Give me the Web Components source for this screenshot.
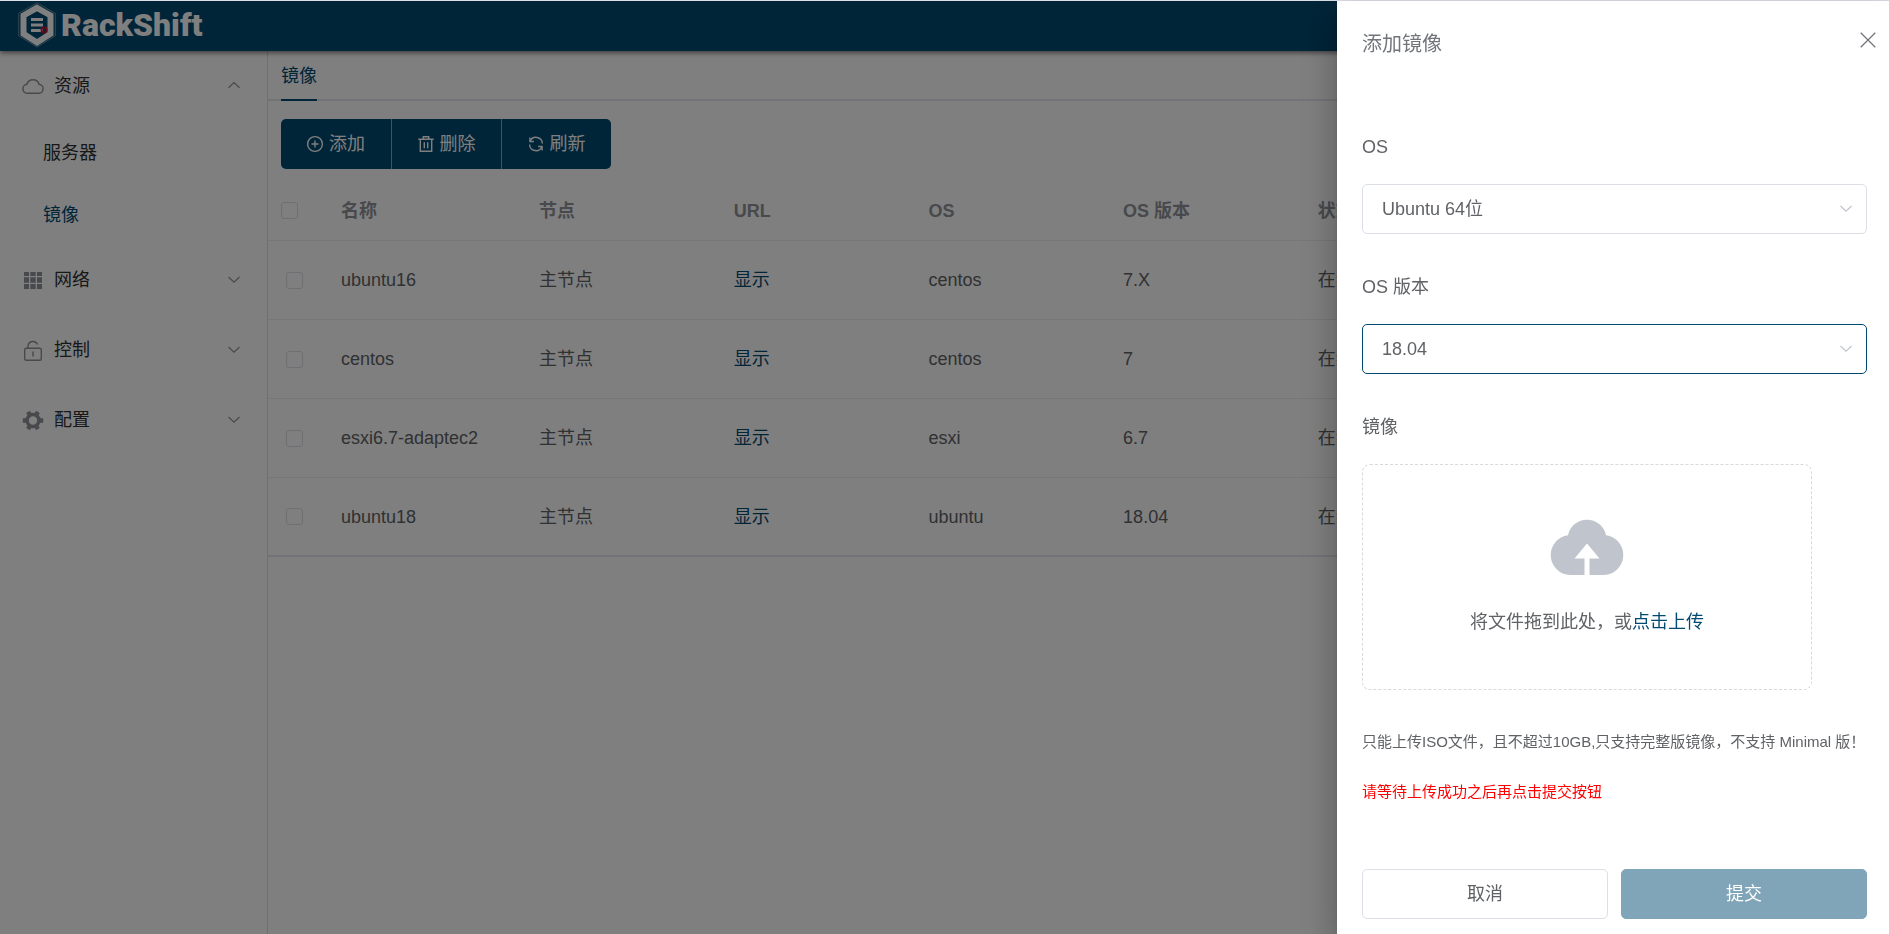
<!DOCTYPE html>
<html lang="zh-CN">
<head>
<meta charset="utf-8">
<title>RackShift</title>
<style>
  :root {
    --primary: #004971;
    --text: #606266;
    --title: #303133;
    --muted: #909399;
    --border: #dcdfe6;
    --line: #ebeef5;
  }
  html, body { height: 100%; }
  body {
    margin: 0;
    box-sizing: border-box;
    border-top: 1px solid var(--border);
    overflow: hidden;
    background: #fff;
    color: var(--text);
    font: 18px/24px "Liberation Sans", "Noto Sans CJK SC", sans-serif;
  }
</style>
</head>
<body>
<rack-app>
  <rack-header slot="header"></rack-header>
  <rack-sidebar slot="aside">
    <rack-menu-group icon="cloud" label="资源" open>
      <rack-menu-item>服务器</rack-menu-item>
      <rack-menu-item active>镜像</rack-menu-item>
    </rack-menu-group>
    <rack-menu-group icon="grid" label="网络"></rack-menu-group>
    <rack-menu-group icon="lock" label="控制"></rack-menu-group>
    <rack-menu-group icon="gear" label="配置"></rack-menu-group>
  </rack-sidebar>
  <rack-tabs>镜像</rack-tabs>
  <rack-toolbar></rack-toolbar>
  <image-table></image-table>
</rack-app>
<rack-drawer heading="添加镜像">
  <rack-select label="OS" value="Ubuntu 64位"></rack-select>
  <rack-select label="OS 版本" value="18.04" active></rack-select>
  <rack-upload label="镜像"></rack-upload>
</rack-drawer>

<script>
const ICONS = {
  cloud: '<svg viewBox="0 0 20 20" fill="none" stroke="currentColor" stroke-width="1.5"><path d="M5 17.300A4.500 4.500 0 0 1 3.900 8.300A6.400 6.400 0 0 1 16.100 8.300A4.500 4.500 0 0 1 15 17.300Z"/></svg>',
  grid: '<svg viewBox="0 0 20 20" fill="currentColor"><path d="M1 2h5v4H1zM7.300 2h5.400v4H7.300zM14 2h5v4h-5zM1 7.300h5v5.400H1zM7.300 7.300h5.400v5.400H7.300zM14 7.300h5v5.400h-5zM1 14h5v5H1zM7.300 14h5.400v5H7.300zM14 14h5v5h-5z"/></svg>',
  lock: '<svg viewBox="0 0 20 20" fill="none" stroke="currentColor" stroke-width="1.400"><rect x="1.700" y="8.200" width="16.600" height="12" rx="1.500"/><path d="M5 8V6A5 5 0 0 1 14.600 4.600M10 11.500v5"/></svg>',
  gear: '<svg viewBox="0 0 20 20" fill="none" stroke="currentColor"><circle cx="10" cy="10.500" r="6" stroke-width="3.600"/><path stroke-width="4.400" d="M17 10.500h3.200M-.2 10.500H3M13.500 16.600l1.400 2.500M5.100 1.900l1.400 2.500M6.500 16.600l-1.400 2.500M14.900 1.900l-1.400 2.500"/></svg>',
  plus: '<svg viewBox="0 0 16 16" fill="none" stroke="currentColor" stroke-width="1.400"><circle cx="8" cy="8" r="7.400"/><path d="M8 4.500v7M4.500 8h7"/></svg>',
  trash: '<svg viewBox="0 0 16 16" fill="none" stroke="currentColor" stroke-width="1.400"><path d="M.3 3.200h15.400M5.300 3V.8h5.400V3M2.300 3.400v11.800h11.400V3.400M6.300 6.200v6M9.700 6.200v6"/></svg>',
  refresh: '<svg viewBox="0 0 16 16" fill="none" stroke="currentColor" stroke-width="1.400"><path d="M1.900 1.500v4h4M2.100 5.300A6.400 6.400 0 0 1 14.400 7.500M14.100 14.500v-4h-4M13.900 10.700A6.400 6.400 0 0 1 1.600 8.500"/></svg>',
  down: '<svg viewBox="0 0 14 14" fill="none" stroke="currentColor" stroke-width="1.200"><path d="M1.500 4L7 9.200L12.500 4"/></svg>',
  up: '<svg viewBox="0 0 14 14" fill="none" stroke="currentColor" stroke-width="1.200"><path d="M1.500 8.700L7 3.500L12.500 8.700"/></svg>',
  close: '<svg viewBox="0 0 16 16" fill="none" stroke="currentColor" stroke-width="1.300"><path d="M.7.7L15.300 15.300M15.300.7L.7 15.300"/></svg>',
  upload: '<svg viewBox="0 0 74 56"><path fill="#c0c4cc" d="M20 56A20 20 0 0 1 18 16.200A19.400 19.400 0 0 1 56 16.200A20 20 0 0 1 54 56Z"/><path fill="#fff" d="M37 24.500L49.500 39.500H39.500V56H34.500V39.500H24.500Z"/></svg>'
};

const BASE = '*{box-sizing:border-box}button,select,input{font:inherit;color:inherit;margin:0}svg{display:block;overflow:visible}';

class Base extends HTMLElement {
  connectedCallback() {
    if (this.shadowRoot) return;
    const t = document.createElement('template');
    t.innerHTML = `<style>${BASE}${this.css()}</style>${this.html()}`;
    this.attachShadow({ mode: 'open' }).append(t.content.cloneNode(true));
  }
  attr(n) { return this.getAttribute(n) || ''; }
}

customElements.define('rack-app', class extends Base {
  css() { return `
    :host{display:grid;grid-template:50px 1fr / 268px 1fr;height:100%}
    header{grid-column:1 / -1;display:grid;position:relative;box-shadow:0 2px 5px rgba(0,0,0,.5)}
    aside{border-right:1px solid var(--border)}
    main{min-width:0}`; }
  html() { return `<header><slot name="header"></slot></header><aside><slot name="aside"></slot></aside><main><slot></slot></main>`; }
});

customElements.define('rack-header', class extends Base {
  css() { return `
    :host{display:flex;align-items:center;background:var(--primary);color:#fff;padding-left:18px}
    a{display:flex;align-items:center;gap:5px;margin-bottom:3px;color:inherit;text-decoration:none;font:900 32px/46px Roboto,"Liberation Sans",sans-serif}
    svg{width:38px;height:46px}`; }
  html() { return `<a href="#"><svg viewBox="0 0 38 46" fill="none">
      <path d="M19 .8L37.300 11.400V33.800L19 45L.7 33.800V11.400Z" stroke="#fff" stroke-opacity=".5" stroke-width=".8"/>
      <path d="M19 5.800L32.500 13.500V31.800L19 40.500L5.500 31.800V13.500Z" stroke="#fff" stroke-width="6"/>
      <path d="M13 17.500h12M13 23h12M13 28.500h12" stroke="#fff" stroke-width="3"/>
      <circle cx="26" cy="28" r="2.500" stroke="#c8102e" stroke-width="1.800"/></svg><span>RackShift</span></a>`; }
});

customElements.define('rack-sidebar', class extends Base {
  css() { return `:host{display:block}`; }
  html() { return `<nav><slot></slot></nav>`; }
});

customElements.define('rack-menu-group', class extends Base {
  css() { return `
    :host{display:block;color:var(--title)}
    button{display:flex;align-items:center;width:100%;height:70px;padding:0 26px 0 23px;border:0;background:none;text-align:left}
    .icon{width:20px;height:20px;margin-right:11px;color:var(--muted)}
    .arrow{width:14px;height:14px;margin-left:auto;color:var(--muted)}`; }
  html() { const open = this.hasAttribute('open'); return `
    <button type="button" aria-expanded="${open}"><span class="icon">${ICONS[this.attr('icon')]}</span>${this.attr('label')}<span class="arrow">${open ? ICONS.up : ICONS.down}</span></button><slot></slot>`; }
});

customElements.define('rack-menu-item', class extends Base {
  css() { return `
    :host{display:block}
    :host([active]){color:var(--primary)}
    a{display:block;height:62px;padding-left:43px;line-height:64px;color:inherit;text-decoration:none}`; }
  html() { return `<a href="#"><slot></slot></a>`; }
});

customElements.define('rack-tabs', class extends Base {
  css() { return `
    :host{display:flex;height:50px;padding-left:13px;box-shadow:inset 0 -2px #e4e7ed;color:var(--primary)}
    a{color:inherit;text-decoration:none;height:50px;line-height:50px;border-bottom:2px solid var(--primary)}`; }
  html() { return `<a href="#"><slot></slot></a>`; }
});

customElements.define('rack-toolbar', class extends Base {
  css() { return `
    :host{display:flex;padding:18px 13px 12px}
    button{display:flex;align-items:center;justify-content:center;gap:6px;width:110px;height:50px;padding:0;border:0;background:var(--primary);color:#fff}
    button + button{border-left:1px solid rgba(255,255,255,.5)}
    button:first-of-type{border-radius:5px 0 0 5px}
    button:last-of-type{border-radius:0 5px 5px 0}
    svg{width:16px;height:16px}`; }
  html() { return [['plus', '添加'], ['trash', '删除'], ['refresh', '刷新']]
    .map(([i, t]) => `<button type="button">${ICONS[i]}<span>${t}</span></button>`).join(''); }
});

customElements.define('image-table', class extends Base {
  css() { return `
    :host{display:block}
    table{width:100%;table-layout:fixed;border-collapse:separate;border-spacing:0}
    .pick{width:60px}.name{width:198px}
    th,td{padding:0 13px;text-align:left;border-bottom:1px solid var(--line);white-space:nowrap}
    th{height:60px;color:var(--muted)}
    td{height:79px}
    td:first-child{padding-left:18px}
    tbody tr:last-child td{border-bottom:2px solid #e4e7ed}
    a{color:var(--primary);text-decoration:none}
    input{display:block;appearance:none;width:17px;height:17px;border:1px solid var(--border);border-radius:3px;background:#fff}`; }
  html() {
    const rows = [['ubuntu16', 'centos', '7.X'], ['centos', 'centos', '7'], ['esxi6.7-adaptec2', 'esxi', '6.7'], ['ubuntu18', 'ubuntu', '18.04']];
    return `<table>
      <colgroup><col class="pick"><col class="name"><col span="7"></colgroup>
      <thead><tr><th><input type="checkbox" aria-label="全选"></th><th>名称</th><th>节点</th><th>URL</th><th>OS</th><th>OS 版本</th><th>状态</th><th colspan="2"></th></tr></thead>
      <tbody>${rows.map(([n, o, v]) => `<tr><td><input type="checkbox" aria-label="${n}"></td><td>${n}</td><td>主节点</td><td><a href="#">显示</a></td><td>${o}</td><td>${v}</td><td>在线</td><td colspan="2"></td></tr>`).join('')}</tbody>
    </table>`;
  }
});

customElements.define('rack-drawer', class extends Base {
  css() { return `
    :host{position:fixed;inset:1px 0 0;display:flex;justify-content:flex-end;background:rgba(0,0,0,.5)}
    section{display:flex;flex-direction:column;width:552px;padding:30px 22px 15px 25px;background:#fff;overflow:auto;
      box-shadow:0 10px 13px -6px rgba(0,0,0,.2),0 20px 30px 3px rgba(0,0,0,.14),0 8px 38px 6px rgba(0,0,0,.12)}
    .head{display:flex;justify-content:space-between;align-items:flex-start;height:90px;margin-right:-9px;color:#72767b}
    h2{margin:0;font-size:20px;line-height:26px;font-weight:normal}
    .close{border:0;background:none;padding:1px 0}
    .close svg{width:16px;height:16px}
    form{display:flex;flex-direction:column;flex:1}
    .foot{display:grid;grid-template-columns:1fr 1fr;gap:13px;margin-top:auto}
    .foot button{height:50px;border:1px solid var(--border);border-radius:5px;background:#fff}
    .foot .submit{border-color:#80a4b8;background:#80a4b8;color:#fff}`; }
  html() { return `<section role="dialog" aria-labelledby="t">
    <div class="head"><h2 id="t">${this.attr('heading')}</h2><button class="close" type="button" aria-label="关闭">${ICONS.close}</button></div>
    <form><slot></slot><div class="foot"><button type="button">取消</button><button class="submit" type="button">提交</button></div></form>
  </section>`; }
});

customElements.define('rack-select', class extends Base {
  css() { return `
    :host{display:block;margin-bottom:27px}
    label{display:block;line-height:52px;margin-bottom:11px}
    .box{display:grid;align-items:center}
    select,.arrow{grid-area:1 / 1}
    select{appearance:none;width:100%;height:50px;padding:0 40px 0 19px;border:1px solid var(--border);border-radius:5px;background:#fff;outline:0}
    :host([active]) select{border-color:var(--primary)}
    .arrow{justify-self:end;width:14px;height:14px;margin-right:14px;color:#c0c4cc;pointer-events:none}`; }
  html() { return `<label for="s">${this.attr('label')}</label>
    <div class="box"><select id="s"><option>${this.attr('value')}</option></select><span class="arrow">${ICONS.down}</span></div>`; }
});

customElements.define('rack-upload', class extends Base {
  css() { return `
    :host{display:block}
    .label{line-height:52px;margin-bottom:11px}
    .drop{display:flex;flex-direction:column;align-items:center;gap:35px;width:450px;max-width:100%;height:226px;padding-top:54px;border:1px dashed #d9d9d9;border-radius:8px;cursor:pointer}
    .drop svg{width:74px;height:56px}
    .link{color:var(--primary)}
    p{margin:0;font-size:15px;line-height:50px;white-space:nowrap}
    .tip{margin-top:27px}
    .warn{color:#f00}`; }
  html() { return `<div class="label">${this.attr('label')}</div>
    <label class="drop" for="f">${ICONS.upload}<span>将文件拖到此处，或<span class="link">点击上传</span></span></label>
    <input id="f" type="file" accept=".iso" hidden>
    <p class="tip">只能上传ISO文件，且不超过10GB,只支持完整版镜像，不支持 Minimal 版！</p>
    <p class="warn">请等待上传成功之后再点击提交按钮</p>`; }
});
</script>
</body>
</html>
